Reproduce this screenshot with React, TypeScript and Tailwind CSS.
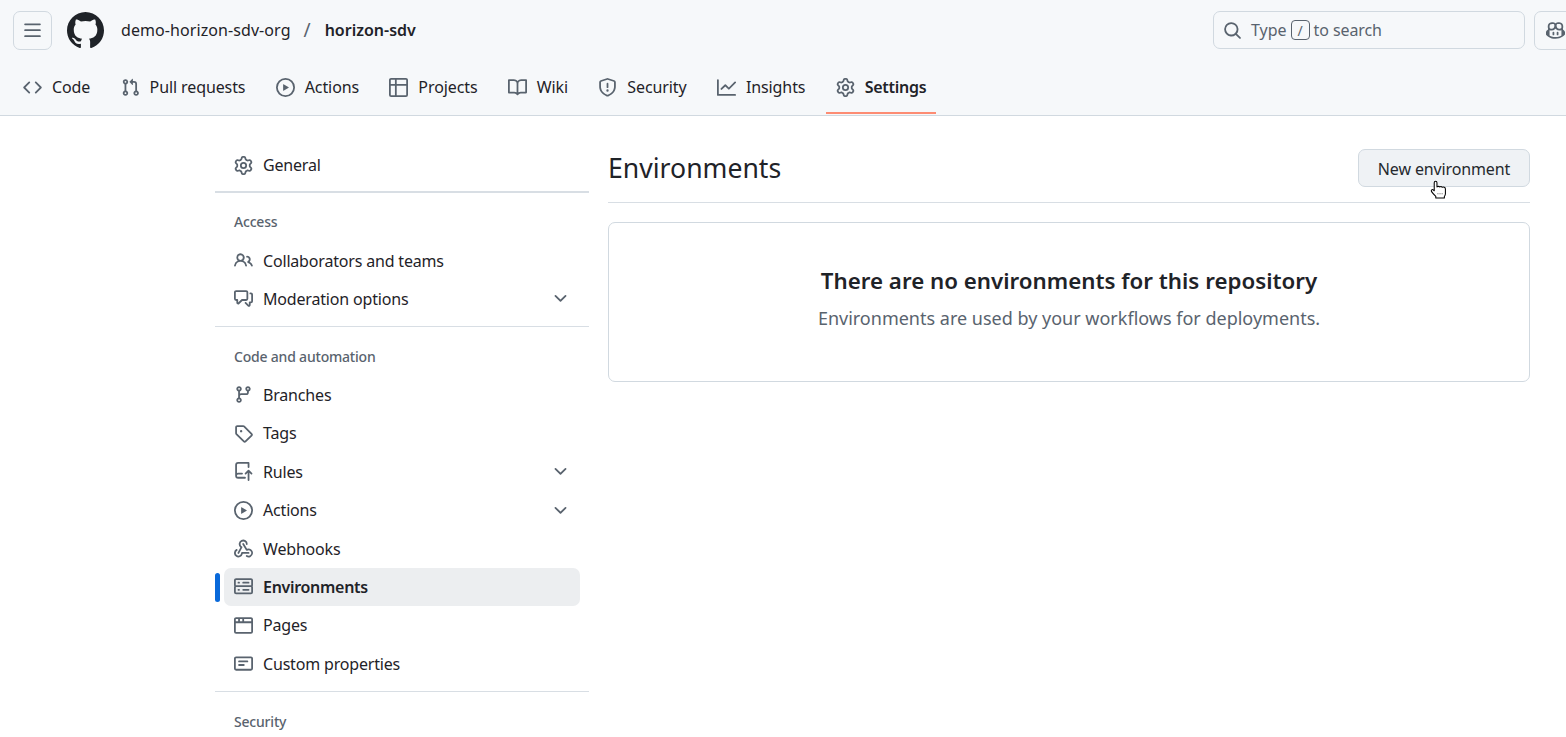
const icons = {
  threeBars: 'M1 2.75A.75.75 0 0 1 1.75 2h12.5a.75.75 0 0 1 0 1.5H1.75A.75.75 0 0 1 1 2.75Zm0 5A.75.75 0 0 1 1.75 7h12.5a.75.75 0 0 1 0 1.5H1.75A.75.75 0 0 1 1 7.75ZM1.75 12h12.5a.75.75 0 0 1 0 1.5H1.75a.75.75 0 0 1 0-1.5Z',
  markGithub: 'M8 0c4.42 0 8 3.58 8 8a8.013 8.013 0 0 1-5.45 7.59c-.4.08-.55-.17-.55-.38 0-.27.01-1.13.01-2.2 0-.75-.25-1.23-.54-1.48 1.78-.2 3.65-.88 3.65-3.95 0-.88-.31-1.59-.82-2.15.08-.2.36-1.02-.08-2.12 0 0-.67-.22-2.2.82-.64-.18-1.32-.27-2-.27-.68 0-1.36.09-2 .27-1.53-1.03-2.2-.82-2.2-.82-.44 1.1-.16 1.92-.08 2.12-.51.56-.82 1.28-.82 2.15 0 3.06 1.86 3.75 3.64 3.95-.23.2-.44.55-.51 1.07-.46.21-1.61.55-2.33-.66-.15-.24-.6-.83-1.23-.82-.67.01-.27.38.01.53.34.19.73.9.82 1.13.16.45.68 1.31 2.69.94 0 .67.01 1.3.01 1.49 0 .21-.15.45-.55.38A7.995 7.995 0 0 1 0 8c0-4.42 3.58-8 8-8Z',
  search: 'M10.68 11.74a6 6 0 0 1-7.922-8.982 6 6 0 0 1 8.982 7.922l3.04 3.04a.749.749 0 0 1-.326 1.275.749.749 0 0 1-.734-.215ZM11.5 7a4.499 4.499 0 1 0-8.997 0A4.499 4.499 0 0 0 11.5 7Z',
  copilot: 'M7.998 15.035c-4.562 0-7.873-2.914-7.998-3.749V9.338c.085-.628.677-1.686 1.588-2.065.013-.07.024-.143.036-.218.029-.183.06-.384.126-.612-.201-.508-.254-1.084-.254-1.656 0-.87.128-1.769.693-2.484.579-.733 1.494-1.124 2.724-1.261 1.206-.134 2.262.034 2.944.765.05.053.096.108.139.165.044-.057.094-.112.143-.165.682-.731 1.738-.899 2.944-.765 1.23.137 2.145.528 2.724 1.261.566.715.693 1.614.693 2.484 0 .572-.053 1.148-.254 1.656.066.228.098.429.126.612.012.076.024.148.037.218.924.385 1.522 1.471 1.591 2.095v1.872c0 .766-3.351 3.795-8.002 3.795Zm0-1.485c2.28 0 4.584-1.11 5.002-1.433V7.862l-.023-.116c-.49.21-1.075.291-1.727.291-1.146 0-2.059-.327-2.71-.991A3.222 3.222 0 0 1 8 6.303a3.24 3.24 0 0 1-.544.743c-.65.664-1.563.991-2.71.991-.652 0-1.236-.081-1.727-.291l-.023.116v4.255c.419.323 2.722 1.433 5.002 1.433ZM6.762 2.83c-.193-.206-.637-.413-1.682-.297-1.019.113-1.479.404-1.713.7-.247.312-.369.789-.369 1.554 0 .793.129 1.171.308 1.371.162.181.519.379 1.442.379.853 0 1.339-.235 1.638-.54.315-.322.527-.827.617-1.553.117-.935-.037-1.395-.241-1.614Zm4.155-.297c-1.044-.116-1.488.091-1.681.297-.204.219-.359.679-.242 1.614.091.726.303 1.231.618 1.553.299.305.784.54 1.638.54.922 0 1.28-.198 1.442-.379.179-.2.308-.578.308-1.371 0-.765-.123-1.242-.37-1.554-.233-.296-.693-.587-1.713-.7ZM6.25 9.037a.75.75 0 0 1 .75.75v1.501a.75.75 0 0 1-1.5 0V9.787a.75.75 0 0 1 .75-.75Zm4.25.75v1.501a.75.75 0 0 1-1.5 0V9.787a.75.75 0 0 1 1.5 0Z',
  code: 'm11.28 3.22 4.25 4.25a.75.75 0 0 1 0 1.06l-4.25 4.25a.749.749 0 0 1-1.275-.326.749.749 0 0 1 .215-.734L13.94 8l-3.72-3.72a.749.749 0 0 1 .326-1.275.749.749 0 0 1 .734.215Zm-6.56 0a.751.751 0 0 1 1.042.018.751.751 0 0 1 .018 1.042L2.06 8l3.72 3.72a.749.749 0 0 1-.326 1.275.749.749 0 0 1-.734-.215L.47 8.53a.75.75 0 0 1 0-1.06Z',
  pullRequest: 'M1.5 3.25a2.25 2.25 0 1 1 3 2.122v5.256a2.251 2.251 0 1 1-1.5 0V5.372A2.25 2.25 0 0 1 1.5 3.25Zm5.677-.177L9.573.677A.25.25 0 0 1 10 .854V2.5h1A2.5 2.5 0 0 1 13.5 5v5.628a2.251 2.251 0 1 1-1.5 0V5a1 1 0 0 0-1-1h-1v1.646a.25.25 0 0 1-.427.177L7.177 3.427a.25.25 0 0 1 0-.354ZM3.75 2.5a.75.75 0 1 0 0 1.5.75.75 0 0 0 0-1.5Zm0 9.5a.75.75 0 1 0 0 1.5.75.75 0 0 0 0-1.5Zm8.25.75a.75.75 0 1 0 1.5 0 .75.75 0 0 0-1.5 0Z',
  play: 'M8 0a8 8 0 1 1 0 16A8 8 0 0 1 8 0ZM1.5 8a6.5 6.5 0 1 0 13 0 6.5 6.5 0 0 0-13 0Zm4.879-2.773 4.264 2.559a.25.25 0 0 1 0 .428l-4.264 2.559A.25.25 0 0 1 6 10.559V5.442a.25.25 0 0 1 .379-.215Z',
  table: 'M0 1.75C0 .784.784 0 1.75 0h12.5C15.216 0 16 .784 16 1.75v12.5A1.75 1.75 0 0 1 14.25 16H1.75A1.75 1.75 0 0 1 0 14.25ZM6.5 6.5v8h7.75a.25.25 0 0 0 .25-.25V6.5Zm8-1.5V1.75a.25.25 0 0 0-.25-.25H6.5V5Zm-13 1.5v7.75c0 .138.112.25.25.25H5v-8ZM5 5V1.5H1.75a.25.25 0 0 0-.25.25V5Z',
  book: 'M0 1.75A.75.75 0 0 1 .75 1h4.253c1.227 0 2.317.59 3 1.501A3.743 3.743 0 0 1 11.006 1h4.245a.75.75 0 0 1 .75.75v10.5a.75.75 0 0 1-.75.75h-4.507a2.25 2.25 0 0 0-1.591.659l-.622.621a.75.75 0 0 1-1.06 0l-.622-.621A2.25 2.25 0 0 0 5.258 13H.75a.75.75 0 0 1-.75-.75Zm7.251 10.324.004-5.073-.002-2.253A2.25 2.25 0 0 0 5.003 2.5H1.5v9h3.757a3.75 3.75 0 0 1 1.994.574ZM8.755 4.75l-.004 7.322a3.752 3.752 0 0 1 1.992-.572H14.5v-9h-3.495a2.25 2.25 0 0 0-2.25 2.25Z',
  shield: 'M7.467.133a1.748 1.748 0 0 1 1.066 0l5.25 1.68A1.75 1.75 0 0 1 15 3.48V7c0 1.566-.32 3.182-1.303 4.682-.983 1.498-2.585 2.813-5.032 3.855a1.697 1.697 0 0 1-1.33 0c-2.447-1.042-4.049-2.357-5.032-3.855C1.32 10.182 1 8.566 1 7V3.48a1.75 1.75 0 0 1 1.217-1.667Zm.61 1.429a.25.25 0 0 0-.153 0l-5.25 1.68a.25.25 0 0 0-.174.238V7c0 1.358.275 2.666 1.057 3.86.784 1.194 2.121 2.34 4.366 3.297a.196.196 0 0 0 .154 0c2.245-.956 3.582-2.104 4.366-3.298C13.225 9.666 13.5 8.36 13.5 7V3.48a.251.251 0 0 0-.174-.237l-5.25-1.68ZM8.75 4.75v3a.75.75 0 0 1-1.5 0v-3a.75.75 0 0 1 1.5 0ZM9 10.5a1 1 0 1 1-2 0 1 1 0 0 1 2 0Z',
  graph: 'M1.5 1.75V13.5h13.75a.75.75 0 0 1 0 1.5H.75a.75.75 0 0 1-.75-.75V1.75a.75.75 0 0 1 1.5 0Zm14.28 2.53-5.25 5.25a.75.75 0 0 1-1.06 0L7 7.06 4.28 9.78a.751.751 0 0 1-1.042-.018.751.751 0 0 1-.018-1.042l3.25-3.25a.75.75 0 0 1 1.06 0L10 7.94l4.72-4.72a.751.751 0 0 1 1.042.018.751.751 0 0 1 .018 1.042Z',
  gear: 'M8 0a8.2 8.2 0 0 1 .701.031C9.444.095 9.99.645 10.16 1.29l.288 1.107c.018.066.079.158.212.224.231.114.454.243.668.386.123.082.233.09.299.071l1.103-.303c.644-.176 1.392.021 1.82.63.27.385.506.792.704 1.218.315.675.111 1.422-.364 1.891l-.814.806c-.049.048-.098.147-.088.294.016.257.016.515 0 .772-.01.147.038.246.088.294l.814.806c.475.469.679 1.216.364 1.891a7.977 7.977 0 0 1-.704 1.217c-.428.61-1.176.807-1.82.63l-1.102-.302c-.067-.019-.177-.011-.3.071a5.909 5.909 0 0 1-.668.386c-.133.066-.194.158-.211.224l-.29 1.106c-.168.646-.715 1.196-1.458 1.26a8.006 8.006 0 0 1-1.402 0c-.743-.064-1.289-.614-1.458-1.26l-.289-1.106c-.018-.066-.079-.158-.212-.224a5.738 5.738 0 0 1-.668-.386c-.123-.082-.233-.09-.299-.071l-1.103.303c-.644.176-1.392-.021-1.82-.63a8.12 8.12 0 0 1-.704-1.218c-.315-.675-.111-1.422.363-1.891l.815-.806c.05-.048.098-.147.088-.294a6.214 6.214 0 0 1 0-.772c.01-.147-.038-.246-.088-.294l-.815-.806C.635 6.045.431 5.298.746 4.623a7.92 7.92 0 0 1 .704-1.217c.428-.61 1.176-.807 1.82-.63l1.102.302c.067.019.177.011.3-.071.214-.143.437-.272.668-.386.133-.066.194-.158.211-.224l.29-1.106C6.009.645 6.556.095 7.299.03 7.53.01 7.764 0 8 0Zm-.571 1.525c-.036.003-.108.036-.137.146l-.289 1.105c-.147.561-.549.967-.998 1.189-.173.086-.34.183-.5.29-.417.278-.97.423-1.529.27l-1.103-.303c-.109-.03-.175.016-.195.045-.22.312-.412.644-.573.99-.014.031-.021.11.059.19l.815.806c.411.406.562.957.53 1.456a4.709 4.709 0 0 0 0 .582c.032.499-.119 1.05-.53 1.456l-.815.806c-.081.08-.073.159-.059.19.162.346.353.677.573.989.02.03.085.076.195.046l1.102-.303c.56-.153 1.113-.008 1.53.27.161.107.328.204.501.29.447.222.85.629.997 1.189l.289 1.105c.029.109.101.143.137.146a6.6 6.6 0 0 0 1.142 0c.036-.003.108-.036.137-.146l.289-1.105c.147-.561.549-.967.998-1.189.173-.086.34-.183.5-.29.417-.278.97-.423 1.529-.27l1.103.303c.109.029.175-.016.195-.045.22-.313.411-.644.573-.99.014-.031.021-.11-.059-.19l-.815-.806c-.411-.406-.562-.957-.53-1.456a4.709 4.709 0 0 0 0-.582c-.032-.499.119-1.05.53-1.456l.815-.806c.081-.08.073-.159.059-.19a6.464 6.464 0 0 0-.573-.989c-.02-.03-.085-.076-.195-.046l-1.102.303c-.56.153-1.113.008-1.53-.27a4.44 4.44 0 0 0-.501-.29c-.447-.222-.85-.629-.997-1.189l-.289-1.105c-.029-.11-.101-.143-.137-.146a6.6 6.6 0 0 0-1.142 0ZM11 8a3 3 0 1 1-6 0 3 3 0 0 1 6 0ZM9.5 8a1.5 1.5 0 1 0-3.001.001A1.5 1.5 0 0 0 9.5 8Z',
  people: 'M2 5.5a3.5 3.5 0 1 1 5.898 2.549 5.508 5.508 0 0 1 3.034 4.084.75.75 0 1 1-1.482.235 4 4 0 0 0-7.9 0 .75.75 0 0 1-1.482-.236A5.507 5.507 0 0 1 3.102 8.05 3.493 3.493 0 0 1 2 5.5ZM11 4a3.001 3.001 0 0 1 2.22 5.018 5.01 5.01 0 0 1 2.56 3.012.749.749 0 0 1-.885.954.752.752 0 0 1-.549-.514 3.507 3.507 0 0 0-2.522-2.372.75.75 0 0 1-.574-.73v-.352a.75.75 0 0 1 .416-.672A1.5 1.5 0 0 0 11 5.5.75.75 0 0 1 11 4Zm-5.5-.5a2 2 0 1 0-.001 3.999A2 2 0 0 0 5.5 3.5Z',
  discussion: 'M1.75 1h8.5c.966 0 1.75.784 1.75 1.75v5.5A1.75 1.75 0 0 1 10.25 10H7.061l-2.574 2.573A1.458 1.458 0 0 1 2 11.543V10h-.25A1.75 1.75 0 0 1 0 8.25v-5.5C0 1.784.784 1 1.75 1ZM1.5 2.75v5.5c0 .138.112.25.25.25h1a.75.75 0 0 1 .75.75v2.19l2.72-2.72a.749.749 0 0 1 .53-.22h3.5a.25.25 0 0 0 .25-.25v-5.5a.25.25 0 0 0-.25-.25h-8.5a.25.25 0 0 0-.25.25Zm13 2a.25.25 0 0 0-.25-.25h-.5a.75.75 0 0 1 0-1.5h.5c.966 0 1.75.784 1.75 1.75v5.5A1.75 1.75 0 0 1 14.25 12H14v1.543a1.458 1.458 0 0 1-2.487 1.03L9.22 12.28a.749.749 0 0 1 .326-1.275.749.749 0 0 1 .734.215l2.22 2.22v-2.19a.75.75 0 0 1 .75-.75h1a.25.25 0 0 0 .25-.25Z',
  chevronDown: 'M12.78 5.22a.749.749 0 0 1 0 1.06l-4.25 4.25a.749.749 0 0 1-1.06 0L3.22 6.28a.749.749 0 1 1 1.06-1.06L8 8.939l3.72-3.719a.749.749 0 0 1 1.06 0Z',
  branch: 'M9.5 3.25a2.25 2.25 0 1 1 3 2.122V6A2.5 2.5 0 0 1 10 8.5H6a1 1 0 0 0-1 1v1.128a2.251 2.251 0 1 1-1.5 0V5.372a2.25 2.25 0 1 1 1.5 0v1.836A2.493 2.493 0 0 1 6 7h4a1 1 0 0 0 1-1v-.628A2.25 2.25 0 0 1 9.5 3.25Zm-6 0a.75.75 0 1 0 1.5 0 .75.75 0 0 0-1.5 0Zm8.25-.75a.75.75 0 1 0 0 1.5.75.75 0 0 0 0-1.5ZM4.25 12a.75.75 0 1 0 0 1.5.75.75 0 0 0 0-1.5Z',
  tag: 'M1 7.775V2.75C1 1.784 1.784 1 2.75 1h5.025c.464 0 .91.184 1.238.513l6.25 6.25a1.75 1.75 0 0 1 0 2.474l-5.026 5.026a1.75 1.75 0 0 1-2.474 0l-6.25-6.25A1.75 1.75 0 0 1 1 7.775Zm1.5 0c0 .066.026.13.073.177l6.25 6.25a.25.25 0 0 0 .354 0l5.025-5.025a.25.25 0 0 0 0-.354l-6.25-6.25a.25.25 0 0 0-.177-.073H2.75a.25.25 0 0 0-.25.25ZM6 5a1 1 0 1 1 0 2 1 1 0 0 1 0-2Z',
  repoPush: 'M1 2.5A2.5 2.5 0 0 1 3.5 0h8.75a.75.75 0 0 1 .75.75v3.5a.75.75 0 0 1-1.5 0V1.5h-8a1 1 0 0 0-1 1v6.708A2.493 2.493 0 0 1 3.5 9h3.25a.75.75 0 0 1 0 1.5H3.5a1 1 0 0 0 0 2h5.75a.75.75 0 0 1 0 1.5H3.5A2.5 2.5 0 0 1 1 11.5Zm13.23 7.79h-.001l-1.224-1.224v6.184a.75.75 0 0 1-1.5 0V9.066L10.28 10.29a.75.75 0 0 1-1.06-1.061l2.505-2.504a.75.75 0 0 1 1.06 0L15.29 9.23a.751.751 0 0 1-.018 1.042.751.751 0 0 1-1.042.018Z',
  webhook: 'M5.5 4.25a2.25 2.25 0 0 1 4.5 0 .75.75 0 0 0 1.5 0 3.75 3.75 0 1 0-6.14 2.889l-2.272 4.258a.75.75 0 0 0 1.324.706L7 7.25a.75.75 0 0 0-.309-1.015A2.25 2.25 0 0 1 5.5 4.25Z M7.364 3.607a.75.75 0 0 1 1.03.257l2.608 4.349a3.75 3.75 0 1 1-.628 6.785.75.75 0 0 1 .752-1.299 2.25 2.25 0 1 0-.033-3.88.75.75 0 0 1-1.03-.256L7.107 4.636a.75.75 0 0 1 .257-1.03Z M2.9 8.776A.75.75 0 0 1 2.625 9.8 2.25 2.25 0 1 0 6 11.75a.75.75 0 0 1 .75-.751h5.5a.75.75 0 0 1 0 1.5H7.425a3.751 3.751 0 1 1-5.55-3.998.75.75 0 0 1 1.024.274Z',
  server: 'M1.75 1h12.5c.966 0 1.75.784 1.75 1.75v4c0 .372-.116.717-.314 1 .198.283.314.628.314 1v4a1.75 1.75 0 0 1-1.75 1.75H1.75A1.75 1.75 0 0 1 0 12.75v-4c0-.372.116-.717.314-1a1.739 1.739 0 0 1-.314-1v-4C0 1.784.784 1 1.75 1ZM1.5 2.75v4c0 .138.112.25.25.25h12.5a.25.25 0 0 0 .25-.25v-4a.25.25 0 0 0-.25-.25H1.75a.25.25 0 0 0-.25.25Zm.25 5.75a.25.25 0 0 0-.25.25v4c0 .138.112.25.25.25h12.5a.25.25 0 0 0 .25-.25v-4a.25.25 0 0 0-.25-.25ZM7 4.75A.75.75 0 0 1 7.75 4h4.5a.75.75 0 0 1 0 1.5h-4.5A.75.75 0 0 1 7 4.75ZM7.75 10h4.5a.75.75 0 0 1 0 1.5h-4.5a.75.75 0 0 1 0-1.5ZM3 4.75A.75.75 0 0 1 3.75 4h.5a.75.75 0 0 1 0 1.5h-.5A.75.75 0 0 1 3 4.75ZM3.75 10h.5a.75.75 0 0 1 0 1.5h-.5a.75.75 0 0 1 0-1.5Z',
  browser: 'M0 2.75C0 1.784.784 1 1.75 1h12.5c.966 0 1.75.784 1.75 1.75v10.5A1.75 1.75 0 0 1 14.25 15H1.75A1.75 1.75 0 0 1 0 13.25ZM14.5 6h-13v7.25c0 .138.112.25.25.25h12.5a.25.25 0 0 0 .25-.25Zm-6-3.5v2h6V2.75a.25.25 0 0 0-.25-.25ZM5 2.5v2h2v-2Zm-3.25 0a.25.25 0 0 0-.25.25V4.5h2v-2Z',
  note: 'M0 3.75C0 2.784.784 2 1.75 2h12.5c.966 0 1.75.784 1.75 1.75v8.5A1.75 1.75 0 0 1 14.25 14H1.75A1.75 1.75 0 0 1 0 12.25Zm1.75-.25a.25.25 0 0 0-.25.25v8.5c0 .138.112.25.25.25h12.5a.25.25 0 0 0 .25-.25v-8.5a.25.25 0 0 0-.25-.25ZM3.5 6.25a.75.75 0 0 1 .75-.75h7a.75.75 0 0 1 0 1.5h-7a.75.75 0 0 1-.75-.75Zm.75 2.25h4a.75.75 0 0 1 0 1.5h-4a.75.75 0 0 1 0-1.5Z',
};

type IconName = keyof typeof icons;

function Octicon({ name, size = 19, className = 'text-[#59636e]' }: { name: IconName; size?: number; className?: string }) {
  return (
    <svg width={size} height={size} viewBox="0 0 16 16" fill="currentColor" className={`shrink-0 ${className}`}>
      <path d={icons[name]} />
    </svg>
  );
}

const tabs: { label: string; icon: IconName; current?: boolean }[] = [
  { label: 'Code', icon: 'code' },
  { label: 'Pull requests', icon: 'pullRequest' },
  { label: 'Actions', icon: 'play' },
  { label: 'Projects', icon: 'table' },
  { label: 'Wiki', icon: 'book' },
  { label: 'Security', icon: 'shield' },
  { label: 'Insights', icon: 'graph' },
  { label: 'Settings', icon: 'gear', current: true },
];

function Tab({ label, icon, current }: { label: string; icon: IconName; current?: boolean }) {
  return (
    <a
      className={`flex h-[54px] items-center gap-[10px] border-b-2 px-[10px] pt-[2px] text-[#1f2328] ${
        current ? 'border-[#fd8c73] font-semibold tracking-[-0.25px]' : 'border-transparent tracking-[-0.1px]'
      }`}
    >
      <Octicon name={icon} />
      <span>{label}</span>
    </a>
  );
}

function NavItem({ label, icon, chevron, active }: { label: string; icon: IconName; chevron?: boolean; active?: boolean }) {
  return (
    <div className="relative px-[9px]">
      {active ? <span className="absolute left-0 top-[5px] h-[29px] w-[5px] rounded-[3px] bg-[#0969da]" /> : null}
      <a
        className={`flex h-[38.4px] items-center gap-[10px] rounded-[7px] px-[10px] text-[#1f2328] ${
          active ? 'bg-[#eceef0] font-semibold tracking-[-0.3px]' : 'tracking-[-0.18px]'
        }`}
      >
        <Octicon name={icon} />
        <span className="flex-1">{label}</span>
        {chevron ? <Octicon name="chevronDown" /> : null}
      </a>
    </div>
  );
}

function SectionTitle({ children, className = '' }: { children: string; className?: string }) {
  return <h3 className={`px-[19px] text-[14px] leading-[20px] font-medium tracking-[-0.2px] text-[#59636e] ${className}`}>{children}</h3>;
}

export default function App() {
  return (
    <div className="h-[737px] w-[1566px] overflow-hidden bg-white text-[16px] text-[#1f2328] [font-family:'Noto_Sans',sans-serif]">
      <header className="h-[116px] overflow-hidden border-b border-[#d1d9e0] bg-[#f6f8fa]">
        <div className="flex h-[60px] w-[1591px] items-center pl-[13px]">
          <button className="flex h-[39px] w-[39px] items-center justify-center rounded-[7px] border border-[#d1d9e0]">
            <Octicon name="threeBars" />
          </button>
          <Octicon name="markGithub" size={37} className="ml-[15px] text-[#1f2328]" />
          <span className="ml-[17px] tracking-[0.08px]">demo-horizon-sdv-org</span>
          <span className="ml-[13px] mr-[14px] text-[19px] text-[#59636e]">/</span>
          <span className="font-semibold">horizon-sdv</span>
          <div className="ml-auto flex h-[38px] w-[312px] items-center rounded-[7px] border border-[#d1d9e0] pl-[9px] text-[#59636e]">
            <Octicon name="search" />
            <span className="ml-[9px]">Type</span>
            <kbd className="mx-[4px] flex h-[20px] w-[19px] items-center justify-center rounded-[4px] border border-[#59636e] text-[14px] [font-family:'Noto_Sans',sans-serif]">
              /
            </kbd>
            <span className="tracking-[-0.1px]">to search</span>
          </div>
          <button className="ml-[9px] flex h-[39px] w-[57px] shrink-0 items-center rounded-[7px] border border-[#d1d9e0] pl-[11px]">
            <Octicon name="copilot" />
          </button>
        </div>
        <nav className="flex gap-[10.3px] pl-[13px]">
          {tabs.map((tab) => (
            <Tab key={tab.label} {...tab} />
          ))}
        </nav>
      </header>

      <div className="flex pl-[215px] pt-[29px]">
        <aside className="w-[374px] shrink-0 pt-[1px]">
          <NavItem label="General" icon="gear" />
          <div className="mt-[7px] h-[2px] bg-[#d8dee4]" />

          <SectionTitle className="mt-[19px]">Access</SectionTitle>
          <div className="mt-[9px]">
            <NavItem label="Collaborators and teams" icon="people" />
            <NavItem label="Moderation options" icon="discussion" chevron />
          </div>
          <div className="mt-[8px] h-px bg-[#d8dee4]" />

          <SectionTitle className="mt-[20px]">Code and automation</SectionTitle>
          <div className="mt-[8.6px]">
            <NavItem label="Branches" icon="branch" />
            <NavItem label="Tags" icon="tag" />
            <NavItem label="Rules" icon="repoPush" chevron />
            <NavItem label="Actions" icon="play" chevron />
            <NavItem label="Webhooks" icon="webhook" />
            <NavItem label="Environments" icon="server" active />
            <NavItem label="Pages" icon="browser" />
            <NavItem label="Custom properties" icon="note" />
          </div>
          <div className="mt-[8.4px] h-px bg-[#d8dee4]" />

          <SectionTitle className="mt-[20px]">Security</SectionTitle>
        </aside>

        <main className="ml-[19px] w-[922px] shrink-0">
          <div className="flex h-[58px] items-start justify-between border-b border-[#d8dee4] pt-[4px]">
            <h2 className="text-[26.6px] leading-[38px] font-normal">Environments</h2>
            <button className="relative h-[38px] w-[172px] rounded-[7px] border border-[#d1d9e0] bg-[#eff2f5] pt-[1px] tracking-[-0.13px] text-[#25292e]">
              New environment
              <svg width="19" height="19" viewBox="0 0 18 18" className="absolute left-[71px] top-[30px]">
                <path
                  d="M4 2.5c0-1.8 2.6-1.8 2.6 0V6.500c1-.6 2-.5 2.600.1.8-.5 1.800-.4 2.400.3 1.200-.5 3 0 3 1.600V13c0 1.200-.5 2-1 2.600V17H5.500v-1.500C4 14 2.500 12.500 1.500 11c-.9-1.300.6-2.700 1.800-1.500l.7.700z"
                  fill="white"
                  stroke="black"
                  strokeWidth="1"
                  strokeLinejoin="round"
                />
                <path d="M7 13h6" stroke="#666" strokeWidth="1" strokeDasharray="1 1" />
              </svg>
            </button>
          </div>
          <div className="mt-[19px] flex h-[160px] flex-col items-center rounded-[7px] border border-[#d1d9e0] pt-[41px]">
            <h3 className="text-[22.3px] leading-[34px] font-semibold">There are no environments for this repository</h3>
            <p className="mt-[5px] text-[18px] leading-[30px] text-[#59636e]">Environments are used by your workflows for deployments.</p>
          </div>
        </main>
      </div>
    </div>
  );
}
